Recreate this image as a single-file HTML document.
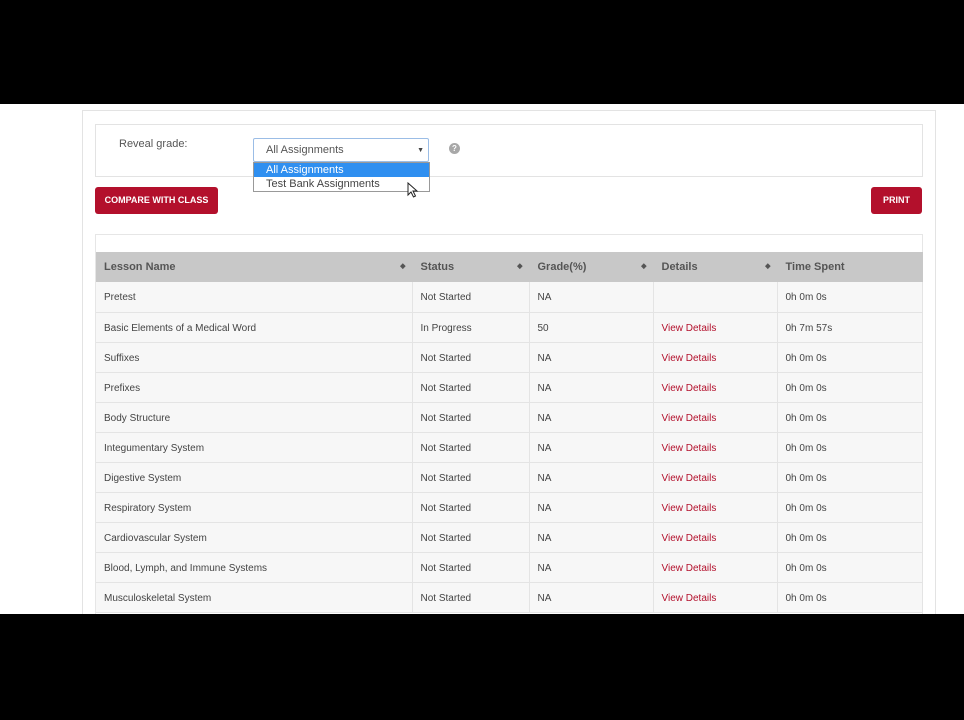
<!DOCTYPE html>
<html><head><style>
body{margin:0;width:964px;height:720px;background:#000;position:relative;overflow:hidden;font-family:"Liberation Sans",Arial,sans-serif;}
.page{position:absolute;left:0;top:104px;width:964px;height:510px;background:#fff;overflow:hidden}
.panel{position:absolute;left:82px;top:6px;width:852px;height:520px;border:1px solid #e3e3e3;border-bottom:none}
.filter{position:absolute;left:95px;top:20px;width:826px;height:51px;border:1px solid #e3e3e3;background:#fff}
.lbl{position:absolute;left:119px;top:34px;font-size:11px;color:#555}
.sel{position:absolute;left:253px;top:34px;width:176px;height:24px;border:1px solid #9bbde6;border-radius:2px;background:#fff;box-sizing:border-box;font-size:11px;color:#555;line-height:23px;padding-left:12px}
.sel .ar{position:absolute;right:4px;top:0;font-size:7px;color:#444}
.dd{position:absolute;left:253px;top:58px;width:177px;height:30px;border:1px solid #999;box-sizing:border-box;background:#fff;font-size:11px}
.dd div{height:14px;line-height:14px;padding-left:12px;color:#444}
.dd .hi{background:#2f8ff0;color:#fff}
.q{position:absolute;left:449px;top:39px;width:11px;height:11px;border-radius:50%;background:#a8a8a8;color:#fff;font-size:8px;font-weight:bold;text-align:center;line-height:11px}
.btn{position:absolute;background:#b3102c;color:#fff;font-size:9px;font-weight:bold;border-radius:3px;text-align:center;line-height:27px;height:27px}
.tbox{position:absolute;left:95px;top:130px;width:826px;height:400px;border:1px solid #e6e6e6}
table{position:absolute;left:96px;top:148px;border-collapse:collapse;font-size:10px;color:#444;table-layout:fixed;width:826px}
th{background:#c8c8c8;height:30px;text-align:left;padding:0 0 0 8px;font-size:11px;color:#555;position:relative;border-right:1px solid #c8c8c8}
th .s{position:absolute;right:6px;top:10px;font-size:7px;color:#555}
td{height:30px;border-bottom:1px solid #e4e4e4;border-right:1px solid #e4e4e4;background:#f7f7f7;padding:2px 0 0 8px;box-sizing:border-box}
td.v{color:#b3102c}
</style></head><body>
<div class="page">
<div class="panel"></div>
<div class="filter"></div>
<div class="lbl">Reveal grade:</div>
<div class="sel">All Assignments<span class="ar">▼</span></div>
<div class="dd"><div class="hi">All Assignments</div><div>Test Bank Assignments</div></div>
<div class="q">?</div>
<div class="btn" style="left:95px;top:83px;width:123px">COMPARE WITH CLASS</div>
<div class="btn" style="left:871px;top:83px;width:51px">PRINT</div>
<div class="tbox"></div>
<table>
<colgroup><col style="width:316px"><col style="width:117px"><col style="width:124px"><col style="width:124px"><col style="width:145px"></colgroup>
<tr><th>Lesson Name<span class="s">◆</span></th><th>Status<span class="s">◆</span></th><th>Grade(%)<span class="s">◆</span></th><th>Details<span class="s">◆</span></th><th>Time Spent</th></tr>
<tr><td>Pretest</td><td>Not Started</td><td>NA</td><td></td><td>0h 0m 0s</td></tr>
<tr><td>Basic Elements of a Medical Word</td><td>In Progress</td><td>50</td><td class="v">View Details</td><td>0h 7m 57s</td></tr>
<tr><td>Suffixes</td><td>Not Started</td><td>NA</td><td class="v">View Details</td><td>0h 0m 0s</td></tr>
<tr><td>Prefixes</td><td>Not Started</td><td>NA</td><td class="v">View Details</td><td>0h 0m 0s</td></tr>
<tr><td>Body Structure</td><td>Not Started</td><td>NA</td><td class="v">View Details</td><td>0h 0m 0s</td></tr>
<tr><td>Integumentary System</td><td>Not Started</td><td>NA</td><td class="v">View Details</td><td>0h 0m 0s</td></tr>
<tr><td>Digestive System</td><td>Not Started</td><td>NA</td><td class="v">View Details</td><td>0h 0m 0s</td></tr>
<tr><td>Respiratory System</td><td>Not Started</td><td>NA</td><td class="v">View Details</td><td>0h 0m 0s</td></tr>
<tr><td>Cardiovascular System</td><td>Not Started</td><td>NA</td><td class="v">View Details</td><td>0h 0m 0s</td></tr>
<tr><td>Blood, Lymph, and Immune Systems</td><td>Not Started</td><td>NA</td><td class="v">View Details</td><td>0h 0m 0s</td></tr>
<tr><td>Musculoskeletal System</td><td>Not Started</td><td>NA</td><td class="v">View Details</td><td>0h 0m 0s</td></tr>
</table>
<svg style="position:absolute;left:407px;top:78px" width="12" height="16" viewBox="0 0 12 16"><path d="M1 1 L1 13 L4 10 L6.5 15 L8.5 14 L6 9 L10 9 Z" fill="#fff" stroke="#222" stroke-width="1"/></svg>
</div>
</body></html>
